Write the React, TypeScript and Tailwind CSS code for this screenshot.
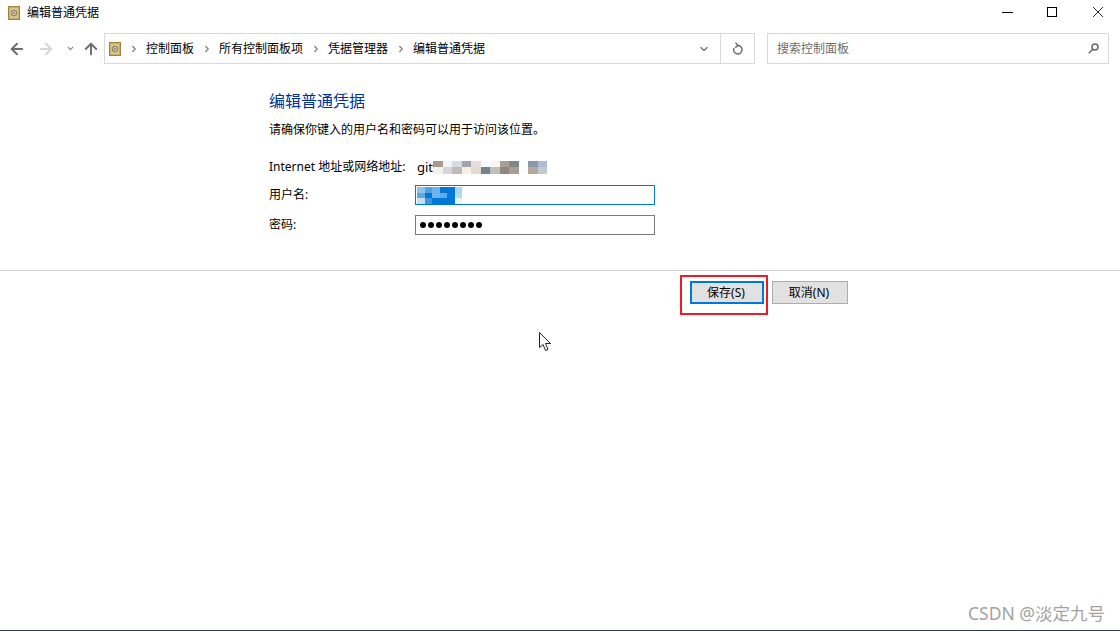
import { ArrowLeft, ArrowRight, ArrowUp, ChevronDown, ChevronRight } from "lucide-react";

const FONT = "font-['Noto_Sans','Noto_Sans_CJK_SC',sans-serif]";

// pixelated bits from the screenshot (the blurred address and user name)
const addressMosaic = [
  ["#a89a8a", "#f4f4f4", "#d3dde6", "#a3a3ad", "#e6dcdc", "#f4fcff", "#f6f6f6", "#a89f96", "#7f8a86", "#ffffff", "#8d99a8", "#aebbd4"],
  ["#f0f0f0", "#d5d5d5", "#bcbcbc", "#fbeee0", "#e3dbd2", "#74828c", "#bfbfbf", "#8f877d", "#a89e93", "#ffffff", "#b5a99c", "#bcccd0"],
];
const userMosaic = [
  ["#8cc4ee", "#4fa3e4", "#6bb3e8", "#0078d7", "#0078d7", "#a9d4f5"],
  ["#5aa9e6", "#0078d7", "#6db5ea", "#5cabe6", "#0078d7", "#b5daf6"],
  ["#c5e0f5", "#3d93de", "#0078d7", "#0078d7", "#0078d7", "#e8f3fb"],
];

function SafeIcon() {
  return (
    <svg width="12" height="14" viewBox="0 0 12 14" className="shrink-0">
      <rect x="0.5" y="0.5" width="11" height="13" fill="#c9ad68" stroke="#a0853f" />
      <rect x="2" y="2" width="8" height="10" fill="#d9c78f" />
      <circle cx="6" cy="7" r="3.2" fill="#8f8668" />
      <circle cx="6" cy="7" r="1.9" fill="#e4dcc0" />
      <circle cx="6" cy="7" r="0.9" fill="#77705a" />
    </svg>
  );
}

function Mosaic({ rows, size, height }: { rows: string[][]; size: number; height: number }) {
  return (
    <div className="flex flex-col">
      {rows.map((row, i) => (
        <div key={i} className="flex">
          {row.map((c, j) => (
            <div key={j} style={{ width: size, height, backgroundColor: c }} />
          ))}
        </div>
      ))}
    </div>
  );
}

function Crumb({ label }: { label: string }) {
  return (
    <div className="flex items-center">
      <ChevronRight size={10} strokeWidth={3} className="text-[#808080] ml-[4px] mr-[3px]" />
      <span className="px-[4px]">{label}</span>
    </div>
  );
}

export default function App() {
  return (
    <div className={`${FONT} relative w-[1120px] h-[631px] overflow-hidden bg-white text-[12px] leading-[16px] text-black`}>
      {/* TITLE BAR */}
      <div className="flex items-center h-[25px] pl-[8px]">
        <SafeIcon />
        <span className="ml-[7px]">编辑普通凭据</span>
        <div className="ml-auto flex items-center pr-[17px] -mt-[1px]">
          <div className="w-[11px] h-px bg-black" />
          <div className="w-[10px] h-[10px] border border-black ml-[34px]" />
          <svg width="10" height="10" viewBox="0 0 10 10" stroke="#111" strokeWidth="0.9" className="ml-[36px]">
            <path d="M0 0 L10 10 M10 0 L0 10" />
          </svg>
        </div>
      </div>

      {/* NAV BAR */}
      <div className="flex items-center h-[31px] mt-[8px] pl-[8px] pr-[11px]">
        <ArrowLeft size={18} strokeWidth={2.6} className="text-[#6d6d6d]" />
        <ArrowRight size={18} strokeWidth={2.6} className="text-[#d6d6d6] ml-[11px]" />
        <ChevronDown size={9} strokeWidth={3} className="text-[#808080] ml-[11px]" />
        <ArrowUp size={18} strokeWidth={2.6} className="text-[#6d6d6d] ml-[7px]" />
        <div className="flex items-center h-full w-[651px] ml-[4px] border border-[#d9d9d9]">
          <div className="ml-[4px] mr-[4px]"><SafeIcon /></div>
          <Crumb label="控制面板" />
          <Crumb label="所有控制面板项" />
          <Crumb label="凭据管理器" />
          <Crumb label="编辑普通凭据" />
          <ChevronDown size={12} strokeWidth={2.6} className="text-[#707070] ml-auto mr-[10px]" />
          <div className="flex items-center justify-center w-[34px] h-full border-l border-[#d9d9d9]">
            <svg width="12" height="13" viewBox="0 0 12 13" fill="none" stroke="#707070" strokeWidth="1.5">
              <path d="M5.5 3.5 A4.2 4.2 0 1 1 2 6" />
              <path d="M3.5 0.8 L6 3.4 L3.2 5.6" />
            </svg>
          </div>
        </div>
        <div className="flex items-center justify-between h-full ml-auto w-[342px] px-[9px] border border-[#d9d9d9] text-[#6d6d6d]">
          <span>搜索控制面板</span>
          <svg width="11" height="11" viewBox="0 0 11 11" fill="none" stroke="#666" strokeWidth="1.5">
            <circle cx="7" cy="4" r="3" />
            <path d="M4.8 6.2 L0.8 10.2" />
          </svg>
        </div>
      </div>

      {/* FORM */}
      <div className="pl-[269px] pt-[26px]">
        <h1 className="text-[16px] leading-[22px] text-[#003399]">编辑普通凭据</h1>
        <p className="mt-[10px]">请确保你键入的用户名和密码可以用于访问该位置。</p>
        <div className="flex items-center mt-[20px] h-[18px]">
          <span className="w-[148px]">Internet 地址或网络地址:</span>
          <span className="text-[13px]">git</span>
          <Mosaic rows={addressMosaic} size={9.5} height={6.5} />
        </div>
        <div className="flex items-center mt-[9px]">
          <span className="w-[146px]">用户名:</span>
          <div className="w-[240px] h-[20px] border border-[#0078d7] pl-[1px] pt-px">
            <Mosaic rows={userMosaic} size={7.5} height={5.5} />
          </div>
        </div>
        <div className="flex items-center mt-[10px]">
          <span className="w-[146px]">密码:</span>
          <div className="flex items-center gap-[2px] w-[240px] h-[20px] border border-[#7a7a7a] pl-[4px]">
            {Array.from({ length: 8 }).map((_, i) => (
              <span key={i} className="w-[6px] h-[6px] rounded-full bg-black" />
            ))}
          </div>
        </div>
      </div>

      <div className="h-px bg-[#d0d0d0] mt-[35px]" />

      {/* BUTTONS */}
      <div className="flex pl-[690px] pt-[10px] gap-[8px]">
        <button className="w-[74px] h-[23px] pr-[2px] bg-[#e1e1e1] border-2 border-[#0078d7]">保存(S)</button>
        <button className="w-[76px] h-[23px] pr-[2px] bg-[#e1e1e1] border border-[#adadad]">取消(N)</button>
      </div>

      {/* screenshot annotation, cursor and watermark sit on top */}
      <div className="absolute left-[680px] top-[275px] w-[88px] h-[40px] border-2 border-[#ed1c24]" />
      <svg className="absolute left-[539px] top-[332px]" width="14" height="20" viewBox="0 0 14 20">
        <path d="M0.5 0.5 L0.5 15.5 L4 12.5 L6.5 18.5 L9 17.5 L6.5 11.5 L11.5 11.5 Z" fill="#fff" stroke="#222" strokeWidth="1" />
      </svg>
      <div className="absolute right-[15px] top-[602px] text-[17.5px] leading-[22px] text-[#a3a3a3]">CSDN @淡定九号</div>
      <div className="absolute left-0 right-0 bottom-0 h-px bg-[#2b3a4a]" />
    </div>
  );
}
